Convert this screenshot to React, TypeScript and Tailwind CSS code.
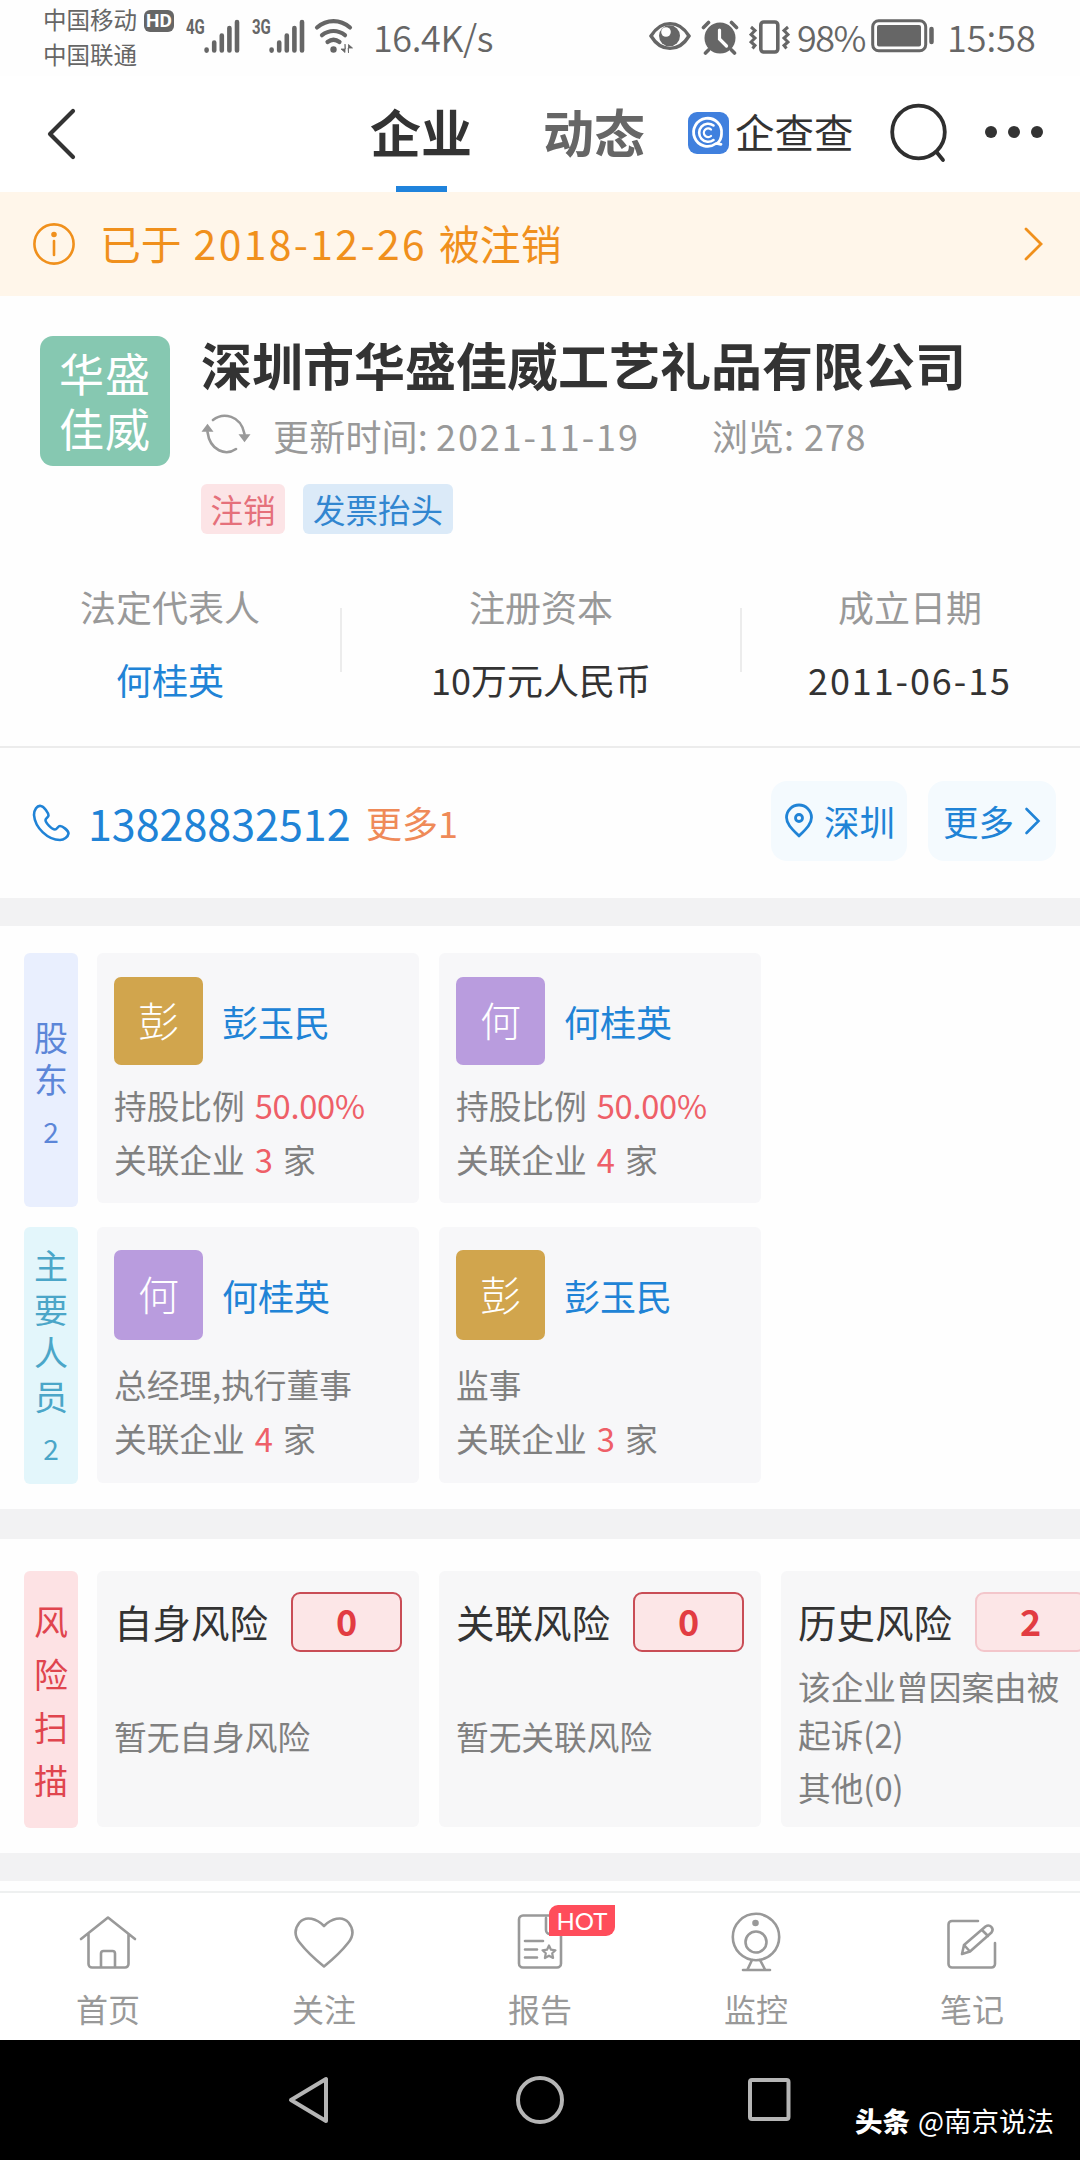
import React from "react";
import clsx from "clsx";

type Person = {
  name: string;
  color: string;
  label: string;
  percent?: string;
  count: number;
};

const shareholders: Person[] = [
  { name: "彭玉民", color: "bg-[#d1a54d]", label: "持股比例", percent: "50.00%", count: 3 },
  { name: "何桂英", color: "bg-[#b99cde]", label: "持股比例", percent: "50.00%", count: 4 },
];

const members: Person[] = [
  { name: "何桂英", color: "bg-[#b99cde]", label: "总经理,执行董事", count: 4 },
  { name: "彭玉民", color: "bg-[#d1a54d]", label: "监事", count: 3 },
];

const Signal = () => (
  <svg width="36" height="34" viewBox="0 0 36 34" stroke="#666" strokeWidth="4.6" strokeLinecap="round">
    <path d="M2.6 30.6v1M10.2 23.5v8M17.8 16.5v15M25.4 9v22.5M33 3v28.5" />
  </svg>
);

const StatusBar = () => (
  <div className="flex h-[76px] text-[#666]">
    <div className="ml-[43px] w-[98px] pt-[2px] text-[23.5px] leading-[34.5px]">
      <p>中国移动</p>
      <p>中国联通</p>
    </div>
    <div className="mt-[10px] ml-[3px] flex h-[22px] w-[30px] items-center justify-center rounded-md bg-[#666] font-[Roboto] text-[19px] font-bold text-white">
      HD
    </div>
    <span className="mt-[19px] ml-[12px] w-[18px] origin-left scale-x-75 font-[Roboto] text-[20px] leading-[16px] font-bold">4G</span>
    <div className="mt-[19px]"><Signal /></div>
    <span className="mt-[19px] ml-[12px] w-[17px] origin-left scale-x-75 font-[Roboto] text-[20px] leading-[16px] font-bold">3G</span>
    <div className="mt-[19px]"><Signal /></div>
    <svg className="mt-[18px] ml-[9px]" width="41" height="36" viewBox="0 0 41 36" fill="none" stroke="#666" strokeWidth="4.2" strokeLinecap="round">
      <path d="M3 9.5C13 1 26 1 36 9.500" />
      <path d="M8 17.200c7-5.600 16-5.600 23 0" />
      <path d="M13.500 24c4-3 8-3 12 0" />
      <circle cx="19.500" cy="31.500" r="3.200" fill="#666" stroke="none" />
      <path d="M31 26.500v8L27 31h4zM34.500 34.500v-8l4 3.500h-4z" fill="#666" strokeWidth="0.800" />
    </svg>
    <span className="mt-[16px] ml-[18px] w-[120px] text-[36px] leading-[40px] font-[350] tracking-[-0.400px]">16.4K/s</span>
    <svg className="mt-[21px] ml-[156px]" width="42" height="30" viewBox="0 0 42 30" fill="none" stroke="#666" strokeWidth="3.400">
      <path d="M2 15C12-1.500 30-1.500 40 15 30 31.500 12 31.500 2 15z" />
      <circle cx="20.500" cy="14.800" r="10.500" fill="#666" stroke="none" />
      <circle cx="17" cy="11" r="4.800" fill="#fff" stroke="none" />
    </svg>
    <svg className="mt-[19px] ml-[10px]" width="38" height="36" viewBox="0 0 38 36" fill="none" stroke="#666" strokeWidth="3.600" strokeLinecap="round">
      <circle cx="19" cy="19" r="15.500" fill="#666" stroke="none" />
      <path d="M2.500 8.500l5-5M35.500 8.500l-5-5M7.500 31l-3 3M30.500 31l3 3" />
      <path d="M18.500 11v9l7 7" stroke="#fff" strokeWidth="3.200" />
    </svg>
    <svg className="mt-[19px] ml-[10px]" width="41" height="36" viewBox="0 0 41 36" fill="none" stroke="#666" strokeWidth="3.600">
      <rect x="11.800" y="3" width="17" height="30" rx="3" />
      <path d="M2 8l4 3.500-4 4 4 3.500-4 4 4 3.500-2.500 3M39 8l-4 3.500 4 4-4 3.500 4 4-4 3.500 2.500 3" strokeWidth="3" />
    </svg>
    <span className="mt-[16px] ml-[7px] w-[71px] text-[36px] leading-[40px] font-[350] tracking-[-1.500px]">98%</span>
    <svg className="mt-[19px] ml-[3px]" width="64" height="34" viewBox="0 0 64 34" fill="none">
      <rect x="1.700" y="1.700" width="53" height="30" rx="6" stroke="#666" strokeWidth="3" />
      <rect x="6" y="6" width="44" height="21.500" rx="2" fill="#666" />
      <path d="M60.500 10v13" stroke="#666" strokeWidth="4.500" strokeLinecap="round" />
    </svg>
    <span className="mt-[16px] ml-[12px] text-[36px] leading-[40px] font-[350]">15:58</span>
  </div>
);

const Header = () => (
  <div className="flex h-[116px] bg-white">
    <svg className="mt-[32px] ml-[46px]" width="32" height="52" viewBox="0 0 32 52" fill="none" stroke="#333" strokeWidth="4.200" strokeLinecap="round" strokeLinejoin="round">
      <path d="M27 3L4 26l23 23" />
    </svg>
    <div className="ml-[292px] flex w-[102px] flex-col items-center justify-between">
      <span className="mt-[26px] text-[51px] leading-[58px] font-bold whitespace-nowrap text-[#333]">企业</span>
      <div className="h-[6px] w-[51px] bg-[#2083dc]"></div>
    </div>
    <span className="mt-[26px] ml-[71px] w-[103px] text-[51px] leading-[58px] font-bold whitespace-nowrap text-[#666]">动态</span>
    <svg className="mt-[36px] ml-[42px]" width="41" height="42" viewBox="0 0 41 42" fill="none" stroke="#fff" strokeLinecap="round">
      <rect width="41" height="42" rx="9" fill="#4080de" stroke="none" />
      <path d="M28 31.500A14 14 0 1 1 33.500 22c0 4-1.500 7-4.500 9.500l4 .8" strokeWidth="2.800" />
      <path d="M25.500 13.500a9 9 0 1 0 0 14.500" strokeWidth="2.600" />
      <path d="M23 17.500a4.300 4.300 0 1 0 0 6.500" strokeWidth="2.300" />
    </svg>
    <span className="mt-[32px] ml-[6px] w-[120px] text-[39.500px] leading-[46px] whitespace-nowrap text-[#333]">企查查</span>
    <svg className="mt-[26px] ml-[34px]" width="60" height="62" viewBox="0 0 60 62" fill="none" stroke="#2f2f2f" strokeWidth="3.800" strokeLinecap="round">
      <circle cx="29.500" cy="30" r="26.300" />
      <path d="M47.500 50l6.500 8" />
    </svg>
    <div className="mt-[50px] ml-[36px] flex h-3 gap-[11px]">
      <i className="size-3 rounded-full bg-[#333]"></i>
      <i className="size-3 rounded-full bg-[#333]"></i>
      <i className="size-3 rounded-full bg-[#333]"></i>
    </div>
  </div>
);

const Banner = () => (
  <div className="flex h-[104px] items-center bg-[#fff6ea] pl-[32px] text-[#f0901c]">
    <svg width="44" height="44" viewBox="0 0 44 44" fill="none" stroke="currentColor" strokeWidth="2.600" strokeLinecap="round">
      <circle cx="22" cy="22" r="19.600" />
      <path d="M22 19v14" />
      <circle cx="22" cy="12.500" r="1.500" fill="currentColor" />
    </svg>
    <p className="mb-[2px] ml-[24px] flex w-[923px] gap-[12px] text-[40.800px] leading-[50px]">
      <span>已于</span>
      <span className="tracking-[2.400px]">2018-12-26</span>
      <span>被注销</span>
    </p>
    <svg width="22" height="36" viewBox="0 0 22 36" fill="none" stroke="currentColor" strokeWidth="2.800" strokeLinecap="round">
      <path d="M3 3l15 15L3 33" />
    </svg>
  </div>
);

const Company = () => (
  <div className="flex h-[250px] pt-[40px] pl-[40px]">
    <div className="h-[130px] w-[130px] rounded-[13px] bg-[#86c8b1] pt-[9px] text-center text-[45px] leading-[55px] tracking-[1px] text-white">
      <p>华盛</p>
      <p>佳威</p>
    </div>
    <div className="ml-[31px]">
      <h1 className="text-[51px] leading-[56px] font-bold text-[#333]">深圳市华盛佳威工艺礼品有限公司</h1>
      <div className="mt-[15px] flex h-[56px] items-center text-[36px] text-[#999]">
        <svg className="mb-[3px]" width="50" height="42" viewBox="0 0 50 42" fill="none" stroke="#999" strokeWidth="2.600" strokeLinecap="round">
          <path d="M12 7C22-1 40 2 43.500 21M35 36C25 43 9 38 6.500 19" />
          <path d="M39 22h9l-4.500 6zM2 18h9L6.500 12z" fill="#999" strokeWidth="1.500" />
        </svg>
        <span className="ml-[22px] tracking-[0.200px]">更新时间:</span>
        <span className="ml-[8px] w-[209px] tracking-[1.900px]">2021-11-19</span>
        <span className="ml-[67px]">浏览:</span>
        <span className="ml-[10px] tracking-[0.700px]">278</span>
      </div>
      <div className="mt-[21px] flex gap-[18px] text-[32.500px] leading-[49px]">
        <span className="h-[50px] w-[84px] rounded-md bg-[#fce4e6] text-center text-[#e5707b]">注销</span>
        <span className="h-[50px] w-[150px] rounded-md bg-[#dbeaf8] text-center text-[#3186d0]">发票抬头</span>
      </div>
    </div>
  </div>
);

const Stat = ({ label, children, className }: { label: string; children: React.ReactNode; className: string }) => (
  <div className={clsx("flex flex-col items-center text-[36px] leading-[48px]", className)}>
    <span className="text-[#999]">{label}</span>
    <span className="mt-[25px]">{children}</span>
  </div>
);

const Stats = () => (
  <div className="flex h-[202px] border-b-2 border-[#ececec] pt-[36px]">
    <Stat label="法定代表人" className="w-[340px]"><b className="font-normal text-[#2083d6]">何桂英</b></Stat>
    <div className="mt-[26px] h-[64px] w-[2px] bg-[#ececec]"></div>
    <Stat label="注册资本" className="w-[398px]">10万元人民币</Stat>
    <div className="mt-[26px] h-[64px] w-[2px] bg-[#ececec]"></div>
    <Stat label="成立日期" className="w-[336px]"><span className="tracking-[1.900px]">2011-06-15</span></Stat>
  </div>
);

const Contact = () => (
  <div className="flex h-[150px] items-center pl-[32px] text-[#2083d6]">
    <svg width="38" height="38" viewBox="0 0 38 38" fill="none" stroke="currentColor" strokeWidth="2.600" strokeLinejoin="round">
      <path d="M9 2C5 1 2 6 2 11c1 13 14 25 26 25 4 0 8-3 8.500-6.500 0-3-6-7.500-8.500-7.500-2 0-3 3.500-5 3.500-3 0-9.500-6.500-9.500-9.500 0-2 3-2.500 3-4.500C16.500 9 12 2.500 9 2z" />
    </svg>
    <span className="mb-[2px] ml-[18px] w-[262px] text-[43px] leading-[50px]">13828832512</span>
    <span className="mb-[2px] ml-[16px] w-[96px] text-[36px] leading-[50px] whitespace-nowrap text-[#ef8a58]">更多1</span>
    <div className="mb-1 ml-[309px] flex h-[80px] w-[136px] items-center rounded-2xl bg-[#f4fafe] pl-[13px]">
      <svg width="30" height="36" viewBox="0 0 30 36" fill="none" stroke="currentColor" strokeWidth="2.800" strokeLinejoin="round">
        <path d="M15 33C8 26 2.500 21 2.500 14.500a12.500 12.500 0 0 1 25 0C27.500 21 22 26 15 33z" />
        <circle cx="15" cy="15" r="3.500" />
      </svg>
      <span className="ml-[10px] text-[35.500px] whitespace-nowrap">深圳</span>
    </div>
    <div className="mb-1 ml-[21px] flex h-[80px] w-[128px] items-center rounded-2xl bg-[#f4fafe] pl-[15px]">
      <span className="text-[35.500px] whitespace-nowrap">更多</span>
      <svg className="ml-[9px]" width="20" height="30" viewBox="0 0 20 30" fill="none" stroke="currentColor" strokeWidth="2.600" strokeLinecap="round">
        <path d="M3.500 3l12 12-12 12" />
      </svg>
    </div>
  </div>
);

const SideTab = ({ text, count, className }: { text: string; count?: number; className: string }) => (
  <div className={clsx("-mr-[1px] flex w-[54px] shrink-0 flex-col items-center justify-center rounded-md text-[34px]", className)}>
    {text.split("").map((c) => <span key={c}>{c}</span>)}
    {count && <span className="mt-[10px] text-[28px]">{count}</span>}
  </div>
);

const PersonCard = ({ data, tall }: { data: Person; tall?: boolean }) => (
  <div className={clsx("w-[322px] shrink-0 rounded-md bg-[#f7f7f9] pl-[17px] text-[32.700px] whitespace-nowrap text-[#808080]", tall ? "h-[256px] pt-[23px]" : "h-[250px] pt-[24px]")}>
    <div className="flex items-center">
      <div className={clsx("flex w-[89px] items-center justify-center rounded-[7px] pb-[2px] text-[41px] font-light text-white", data.color, tall ? "h-[90px]" : "h-[88px]")}>
        {data.name[0]}
      </div>
      <span className="ml-[19px] text-[36px] text-[#2083d6]">{data.name}</span>
    </div>
    <p className={clsx("leading-[54px]", tall ? "mt-[17px]" : "mt-[13px]")}>
      {data.label}
      {data.percent && <span className="ml-[10px] tracking-[-0.300px] text-[#ee5f68]">{data.percent}</span>}
    </p>
    <p className="leading-[54px]">
      关联企业<span className="mx-[10px] text-[#ee5f68]">{data.count}</span>家
    </p>
  </div>
);

const RiskCard = ({ title, count, light, children }: { title: string; count: number; light?: boolean; children: React.ReactNode }) => (
  <div className="h-[256px] w-[322px] shrink-0 rounded-md bg-[#f7f7f8] pt-[21px] pl-[17px] text-[32.700px] text-[#808080]">
    <div className="flex items-center">
      <span className="mb-[2px] w-[177px] text-[38.500px] leading-[50px] text-[#333]">{title}</span>
      <div className={clsx("flex h-[60px] w-[111px] items-center justify-center rounded-[9px] border-2 bg-[#fce6e7] pb-1 text-[36px] font-bold text-[#e23c42]", light ? "border-[#f3c6cb]" : "border-[#c94d56]")}>
        {count}
      </div>
    </div>
    {children}
  </div>
);

const navColor = { fill: "none", stroke: "#999", strokeWidth: 2.6, strokeLinecap: "round", strokeLinejoin: "round" } as const;

const NavItem = ({ label, children }: { label: string; children: React.ReactNode }) => (
  <div className="relative flex w-1/5 flex-col items-center pt-[17px]">
    <svg width="64" height="64" viewBox="0 0 64 64" {...navColor}>{children}</svg>
    <span className="mt-[9px] text-[32px] leading-[50px] text-[#999]">{label}</span>
    {label === "报告" && (
      <span className="absolute top-[12px] left-[117px] h-[31px] w-[66px] rounded-tl-[9px] rounded-br-[9px] bg-[#ff4d5b] text-center font-[Lato] text-[24px] leading-[31px] text-white">
        HOT
      </span>
    )}
  </div>
);

const BottomNav = () => (
  <div className="flex h-[149px] border-t-2 border-[#eef0f0] bg-white">
    <NavItem label="首页">
      <path d="M5 29L32 7.500 59 29M12.500 24v30a3.500 3.500 0 0 0 3.500 3.500h33a3.500 3.500 0 0 0 3.500-3.500V24M25 57V43.500a2.500 2.500 0 0 1 2.500-2.500h9a2.500 2.500 0 0 1 2.500 2.500V57" />
    </NavItem>
    <NavItem label="关注">
      <path d="M32 16C25 9 14 5 7.500 12.500 1.500 20 3 27 8 33c7 9 16 17 24 23.500C40 50 49 42 56 33c5-6 6.500-13 .500-20.500C50 5 39 9 32 16z" />
    </NavItem>
    <NavItem label="报告">
      <path d="M42 5.500H15a4 4 0 0 0-4 4v44a4 4 0 0 0 4 4h34a4 4 0 0 0 4-4V24H42a4 4 0 0 1-4-4V8M17 31h18M17 39.500h12M17 47.500h12" />
      <path d="M41 35.500l2 4.200 4.500.6-3.300 3 .9 4.700-4.100-2.300-4.100 2.300.9-4.700-3.300-3 4.500-.6z" strokeWidth="2.200" />
    </NavItem>
    <NavItem label="监控">
      <circle cx="32" cy="27" r="23.200" />
      <circle cx="32" cy="32" r="10.500" />
      <circle cx="31.500" cy="13" r="2" fill="#999" />
      <path d="M28 50l-4.500 9.500M36 50l5 9.500M19 60h27" />
    </NavItem>
    <NavItem label="笔记">
      <path d="M38 11H12a3.500 3.500 0 0 0-3.500 3.500V54a3.500 3.500 0 0 0 3.500 3.500h39.500A3.500 3.500 0 0 0 55 54V33" />
      <path d="M22 44l2-9 21.500-18.500c4.500-3 9 2 6 6L30 41.500zM42 20l6 6M24.500 35.500l5 5.500" />
    </NavItem>
  </div>
);

const Divider = ({ className }: { className: string }) => <div className={clsx("bg-[#f2f2f3]", className)}></div>;

export default function App() {
  return (
    <div className="h-[2160px] w-[1080px] overflow-hidden bg-[#fefefe] font-['Noto_Sans_CJK_SC',sans-serif] text-[#333]">
      <StatusBar />
      <Header />
      <Banner />
      <Company />
      <Stats />
      <Contact />
      <Divider className="h-[28px]" />

      <div className="h-[583px] pt-[27px] pl-[24px]">
        <div className="flex h-[254px] gap-[20px]">
          <SideTab text="股东" count={2} className="bg-[#e9effe] pt-[7px] leading-[42px] text-[#5c86d8]" />
          {shareholders.map((p) => <PersonCard key={p.name} data={p} />)}
        </div>
        <div className="mt-[20px] flex h-[257px] gap-[20px]">
          <SideTab text="主要人员" count={2} className="bg-[#e3f6fb] pt-[3px] leading-[43.500px] text-[#4ba6c8]" />
          {members.map((p) => <PersonCard key={p.name} data={p} tall />)}
        </div>
      </div>
      <Divider className="h-[30px]" />

      <div className="flex h-[314px] gap-[20px] pt-[32px] pl-[24px]">
        <SideTab text="风险扫描" className="h-[257px] bg-[#fde2e4] leading-[53px] text-[#e0454e]" />
        <RiskCard title="自身风险" count={0}>
          <p className="mt-[59px] leading-[50px]">暂无自身风险</p>
        </RiskCard>
        <RiskCard title="关联风险" count={0}>
          <p className="mt-[59px] leading-[50px]">暂无关联风险</p>
        </RiskCard>
        <RiskCard title="历史风险" count={2} light>
          <p className="mt-[10px] w-[270px] leading-[48px]">该企业曾因案由被起诉(2)</p>
          <p className="mt-[4px] leading-[50px]">其他(0)</p>
        </RiskCard>
      </div>
      <Divider className="mb-[10px] h-[28px]" />

      <BottomNav />

      <div className="relative flex h-[120px] items-center justify-center bg-black">
        <svg width="520" height="60" viewBox="0 0 520 60" fill="none" stroke="#b5b5b5" strokeWidth="4" strokeLinejoin="round">
          <path d="M46 9v42L11 30z" />
          <circle cx="260" cy="30" r="22" />
          <rect x="470" y="10" width="38.500" height="39" rx="2" />
        </svg>
        <p className="absolute top-[62px] left-[855px] flex gap-[8px] text-[27.500px] leading-[36px] whitespace-nowrap text-white">
          <b className="font-black">头条</b>
          <span>@南京说法</span>
        </p>
      </div>
    </div>
  );
}
